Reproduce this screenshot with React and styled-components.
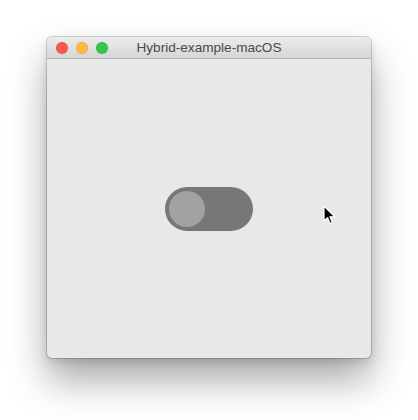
import React from "react";
import styled, { createGlobalStyle } from "styled-components";

const GlobalStyle = createGlobalStyle`
  html, body {
    margin: 0;
    padding: 0;
    background: #ffffff;
  }
  body {
    font-family: "Liberation Sans", Arial, sans-serif;
  }
`;

const Stage = styled.div`
  width: 418px;
  height: 420px;
  padding: 37px 0 0 47px;
  box-sizing: border-box;
`;

const Window = styled.div`
  position: relative;
  width: 324px;
  height: 321px;
  border-radius: 5px;
  overflow: hidden;
  background: #e8e8e8;
  display: flex;
  flex-direction: column;
  box-shadow: 0 0 0 1px rgba(0, 0, 0, 0.16), 0 22px 38px rgba(0, 0, 0, 0.34),
    0 4px 10px rgba(0, 0, 0, 0.12);
`;

const TitleBar = styled.div`
  height: 22px;
  flex: none;
  display: flex;
  align-items: center;
  padding-left: 9px;
  position: relative;
  background: linear-gradient(#ececec, #d6d6d6);
  border-bottom: 1px solid #b4b4b4;
  box-sizing: border-box;
`;

const Lights = styled.div`
  display: flex;
  gap: 8px;
`;

const Light = styled.span`
  width: 12px;
  height: 12px;
  border-radius: 50%;
  background: ${(p) => p.color};
  box-shadow: inset 0 0 0 0.5px rgba(0, 0, 0, 0.15);
`;

const Title = styled.div`
  position: absolute;
  left: 0;
  right: 0;
  top: 0;
  bottom: 0;
  display: flex;
  align-items: center;
  justify-content: center;
  font-size: 13.6px;
  color: #4a4a4a;
  pointer-events: none;
`;

const Content = styled.div`
  flex: 1;
  display: flex;
  align-items: center;
  justify-content: center;
`;

const Track = styled.div`
  width: 88px;
  height: 44px;
  border-radius: 22px;
  background: #777777;
  display: flex;
  align-items: center;
  padding: 0 4px;
  box-sizing: border-box;
`;

const Knob = styled.div`
  width: 36px;
  height: 36px;
  border-radius: 50%;
  background: #a2a2a2;
`;

const Cursor = styled.svg`
  position: absolute;
  left: 276px;
  top: 168px;
`;

export default function App() {
  return (
    <>
      <GlobalStyle />
      <Stage>
        <Window>
          <TitleBar>
            <Lights>
              <Light color="#fc5753" />
              <Light color="#fdbc40" />
              <Light color="#33c748" />
            </Lights>
            <Title>Hybrid-example-macOS</Title>
          </TitleBar>
          <Content>
            <Track>
              <Knob />
            </Track>
          </Content>
          <Cursor width="14" height="20" viewBox="0 0 14 20">
            <path
              d="M1 1 L1 16 L4.5 12.6 L7 18.5 L9.3 17.5 L6.9 11.8 L11.8 11.8 Z"
              fill="#000"
              stroke="#fff"
              strokeWidth="1.2"
              strokeLinejoin="round"
            />
          </Cursor>
        </Window>
      </Stage>
    </>
  );
}
